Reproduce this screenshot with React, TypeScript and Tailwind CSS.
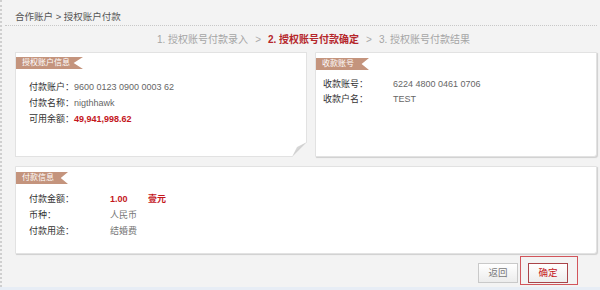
const Tag = ({ text, w }: { text: string; w: string }) => (
  <div
    className={`${w} h-[12px] bg-[#c4947d] text-white text-[8px] leading-[12px] pl-[6px] [clip-path:polygon(0_0,100%_0,86%_50%,100%_100%,0_100%)]`}
  >
    {text}
  </div>
);

const steps = ["1. 授权账号付款录入", "2. 授权账号付款确定", "3. 授权账号付款结果"];

export default function App() {
  return (
    <div className="w-[600px] h-[290px] bg-[#f3f3f3] font-['Liberation_Sans','Noto_Sans_CJK_SC',sans-serif] flex flex-col overflow-hidden">
      <div className="h-[287px] shrink-0 border-l-2 border-dotted border-[#cfcfcf] flex flex-col">
        <div className="h-[25px] shrink-0 pl-[13px] pt-[10px] text-[9.5px] leading-[13px] text-[#555]">
          合作账户 &gt; 授权账户付款
        </div>
        <div className="mx-[3px] h-0 shrink-0 border-t border-dotted border-[#c8c8c8]" />

        <div className="h-[26px] shrink-0 pl-[155px] pt-[7px] flex items-start text-[10px] leading-[14px]">
          {steps.map((s, i) => (
            <div key={s} className="flex items-center">
              {i > 0 && <span className="px-[7px] text-[#aaa]">&gt;</span>}
              <span className={i === 1 ? "text-[#b5262b] font-bold" : "text-[#a5a5a5]"}>{s}</span>
            </div>
          ))}
        </div>

        <div className="pl-[13px] pr-[3px] flex flex-col">
          <div className="grid grid-cols-[292px_282px] gap-[8px] h-[105px]">
            <div className="relative bg-white border border-[#e2e2e2] pt-[4px]">
              <Tag text="授权账户信息" w="w-[67px]" />
              <div className="mt-[10px] pl-[13px] text-[9px] leading-[16px]">
                <div className="flex">
                  <span className="text-[#333]">付款账户：</span>
                  <span className="text-[#666]">9600 0123 0900 0003 62</span>
                </div>
                <div className="flex">
                  <span className="text-[#333]">付款名称：</span>
                  <span className="text-[#666]">nigthhawk</span>
                </div>
                <div className="flex">
                  <span className="text-[#333]">可用余额：</span>
                  <span className="text-[#c4161c] font-bold">49,941,998.62</span>
                </div>
              </div>
              <svg className="absolute right-[-1px] bottom-[-1px]" width="15" height="15" viewBox="0 0 15 15">
                <defs>
                  <linearGradient id="curl" x1="0" y1="0" x2="1" y2="1">
                    <stop offset="0" stopColor="#f4f4f4" />
                    <stop offset="1" stopColor="#a9a9a9" />
                  </linearGradient>
                </defs>
                <polygon points="0,15 15,0 15,15" fill="#f3f3f3" />
                <polygon points="0,15 15,0 5,5" fill="url(#curl)" />
              </svg>
            </div>

            <div className="bg-white border border-[#e2e2e2] rounded-br-[3px] shadow-[1px_1px_1px_#cfcfcf] pt-[5px]">
              <Tag text="收款账号" w="w-[53px]" />
              <div className="mt-[7px] pl-[7px] text-[9px] leading-[15px]">
                <div className="flex">
                  <span className="w-[70px] text-[#333]">收款账号：</span>
                  <span className="text-[#666]">6224 4800 0461 0706</span>
                </div>
                <div className="flex">
                  <span className="w-[70px] text-[#333]">收款户名：</span>
                  <span className="text-[#666]">TEST</span>
                </div>
              </div>
            </div>
          </div>

          <div className="mt-[9px] h-[88px] bg-white border border-[#e2e2e2] rounded-br-[3px] shadow-[1px_1px_1px_#cfcfcf] pt-[5px]">
            <Tag text="付款信息" w="w-[52px]" />
            <div className="mt-[7px] pl-[13px] text-[9px] leading-[16px]">
              <div className="flex">
                <span className="w-[81px] text-[#333]">付款金额：</span>
                <span className="w-[38px] text-[#c4161c] font-bold">1.00</span>
                <span className="text-[#c4161c] font-bold">壹元</span>
              </div>
              <div className="flex">
                <span className="w-[81px] text-[#333]">币种：</span>
                <span className="text-[#777]">人民币</span>
              </div>
              <div className="flex">
                <span className="w-[81px] text-[#333]">付款用途：</span>
                <span className="text-[#777]">结婚费</span>
              </div>
            </div>
          </div>

          <div className="mt-[2px] h-[29px] pr-[19px] flex justify-end items-start">
            <button className="mt-[7px] w-[40px] h-[20px] border border-[#c9c9c9] bg-gradient-to-b from-white to-[#ececec] text-[9.5px] leading-[18px] text-[#777]">
              返回
            </button>
            <div className="ml-[2px] h-[29px] pl-[7px] pr-[9px] pt-[6px] border border-[#d2555b] flex items-start">
              <button className="w-[40px] h-[20px] border border-[#a94449] bg-gradient-to-b from-white to-[#ededed] text-[9.5px] leading-[18px] text-[#c4161c]">
                确定
              </button>
            </div>
          </div>
        </div>
      </div>
      <div className="flex-1 bg-[#e7edf5]" />
    </div>
  );
}
